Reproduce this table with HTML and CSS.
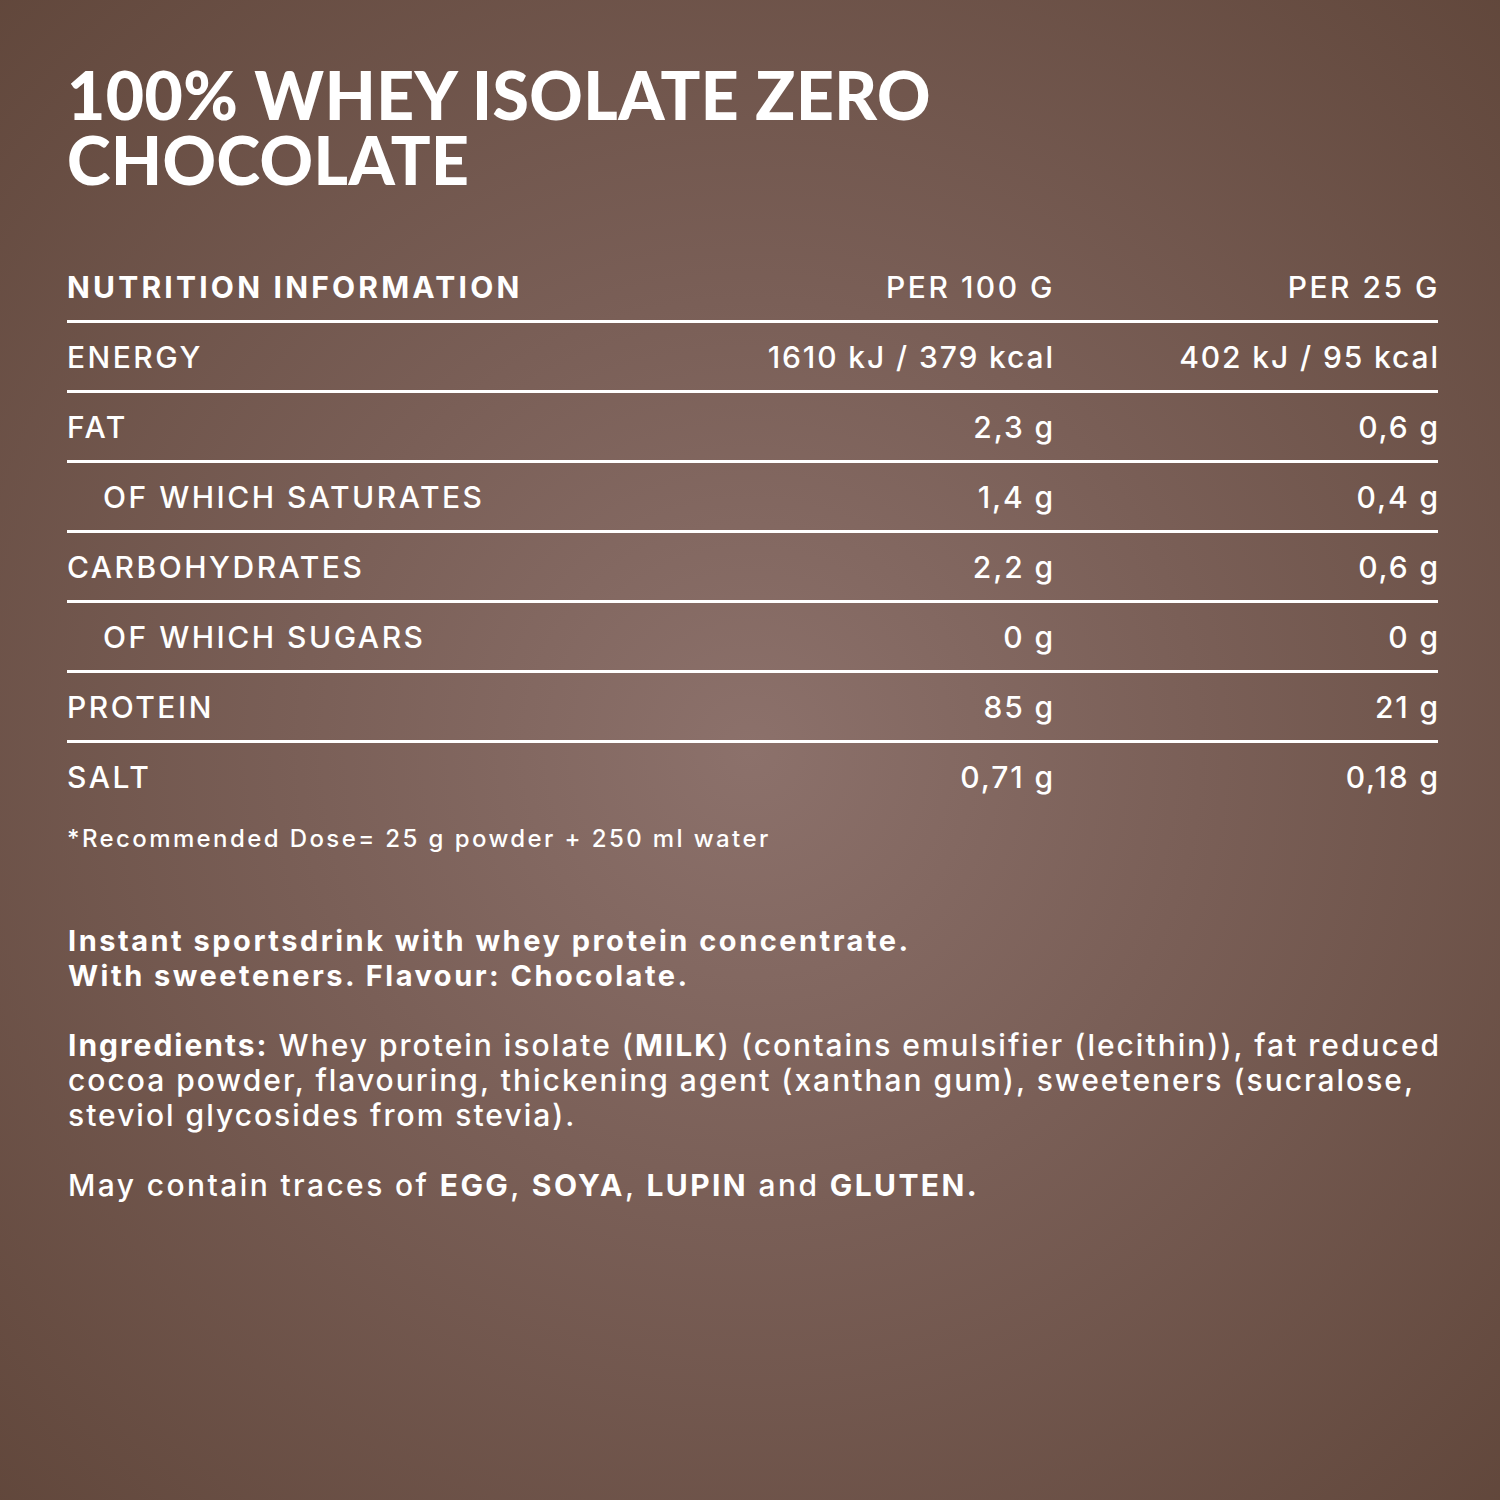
FILE: index.html
```html
<!DOCTYPE html>
<html>
<head>
<meta charset="utf-8">
<link rel="stylesheet" href="styles.css">
</head>
<body>
<div class="page">
  <h1 class="title"><span class="title-line">100% WHEY ISOLATE ZERO</span><span class="title-line">CHOCOLATE</span></h1>

  <div class="table">
    <div class="row head">
      <div class="cell label">NUTRITION INFORMATION</div>
      <div class="cell num">PER 100 G</div>
      <div class="cell num">PER 25 G</div>
    </div>
    <div class="row">
      <div class="cell label">ENERGY</div>
      <div class="cell num">1610 kJ / 379 kcal</div>
      <div class="cell num">402 kJ / 95 kcal</div>
    </div>
    <div class="row">
      <div class="cell label">FAT</div>
      <div class="cell num">2,3 g</div>
      <div class="cell num">0,6 g</div>
    </div>
    <div class="row">
      <div class="cell label sub">OF WHICH SATURATES</div>
      <div class="cell num">1,4 g</div>
      <div class="cell num">0,4 g</div>
    </div>
    <div class="row">
      <div class="cell label">CARBOHYDRATES</div>
      <div class="cell num">2,2 g</div>
      <div class="cell num">0,6 g</div>
    </div>
    <div class="row">
      <div class="cell label sub">OF WHICH SUGARS</div>
      <div class="cell num">0 g</div>
      <div class="cell num">0 g</div>
    </div>
    <div class="row">
      <div class="cell label">PROTEIN</div>
      <div class="cell num">85 g</div>
      <div class="cell num">21 g</div>
    </div>
    <div class="row last">
      <div class="cell label">SALT</div>
      <div class="cell num">0,71 g</div>
      <div class="cell num">0,18 g</div>
    </div>
  </div>

  <p class="note">*Recommended Dose= 25 g powder + 250 ml water</p>

  <p class="desc">Instant sportsdrink with whey protein concentrate.<br>With sweeteners. Flavour: Chocolate.</p>

  <p class="text"><b>Ingredients:</b> Whey protein isolate (<b>MILK</b>) (contains emulsifier (lecithin)), fat reduced<br>cocoa powder, flavouring, thickening agent (xanthan gum), sweeteners (sucralose,<br>steviol glycosides from stevia).</p>

  <p class="text traces">May contain traces of <b>EGG</b>, <b>SOYA</b>, <b>LUPIN</b> and <b>GLUTEN.</b></p>
</div>
</body>
</html>
```

FILE: styles.css
```css
html, body {
  margin: 0;
  padding: 0;
}
body {
  width: 1500px;
  height: 1500px;
  background: radial-gradient(ellipse 75% 75% at 50% 50%, #8c716b 0%, #7a5f57 40%, #5f4539 100%);
  color: #ffffff;
  font-family: "Inter", "Liberation Sans", sans-serif;
  overflow: hidden;
}
.page {
  padding: 62px 62px 0 67px;
}
.title {
  margin: 0;
  display: flex;
  flex-direction: column;
  font-family: "Lato", "Liberation Sans", sans-serif;
  font-weight: 900;
  font-size: 66px;
  line-height: 65px;
  letter-spacing: 0.5px;
}
.title-line {
  display: block;
  height: 65px;
  line-height: 65px;
}
.table {
  margin-top: 61px;
  display: flex;
  flex-direction: column;
}
.row {
  display: grid;
  grid-template-columns: 1fr 400px 385px;
  height: 67px;
  align-items: center;
  border-bottom: 3px solid #ffffff;
  font-size: 30px;
  font-weight: 500;
  letter-spacing: 2.5px;
}
.row .num {
  letter-spacing: 1.9px;
}
.row.head .label {
  font-weight: 700;
  letter-spacing: 3.2px;
}
.row.head .num {
  font-weight: 500;
  letter-spacing: 2.5px;
}
.row.last {
  border-bottom: none;
}
.cell.num {
  text-align: right;
  margin-right: -2px;
}
.cell.sub {
  padding-left: 36px;
}
.note {
  margin: 14px 0 0 0;
  font-size: 24px;
  font-weight: 500;
  letter-spacing: 2.4px;
}
.desc {
  margin: 70px 0 0 1px;
  font-size: 29px;
  font-weight: 700;
  line-height: 35px;
  letter-spacing: 2.5px;
}
.text {
  margin: 35px 0 0 1px;
  font-size: 30px;
  font-weight: 500;
  line-height: 35px;
  letter-spacing: 2px;
  white-space: nowrap;
}
.text.traces {
  letter-spacing: 2.4px;
}
.text b {
  font-weight: 700;
}
```
